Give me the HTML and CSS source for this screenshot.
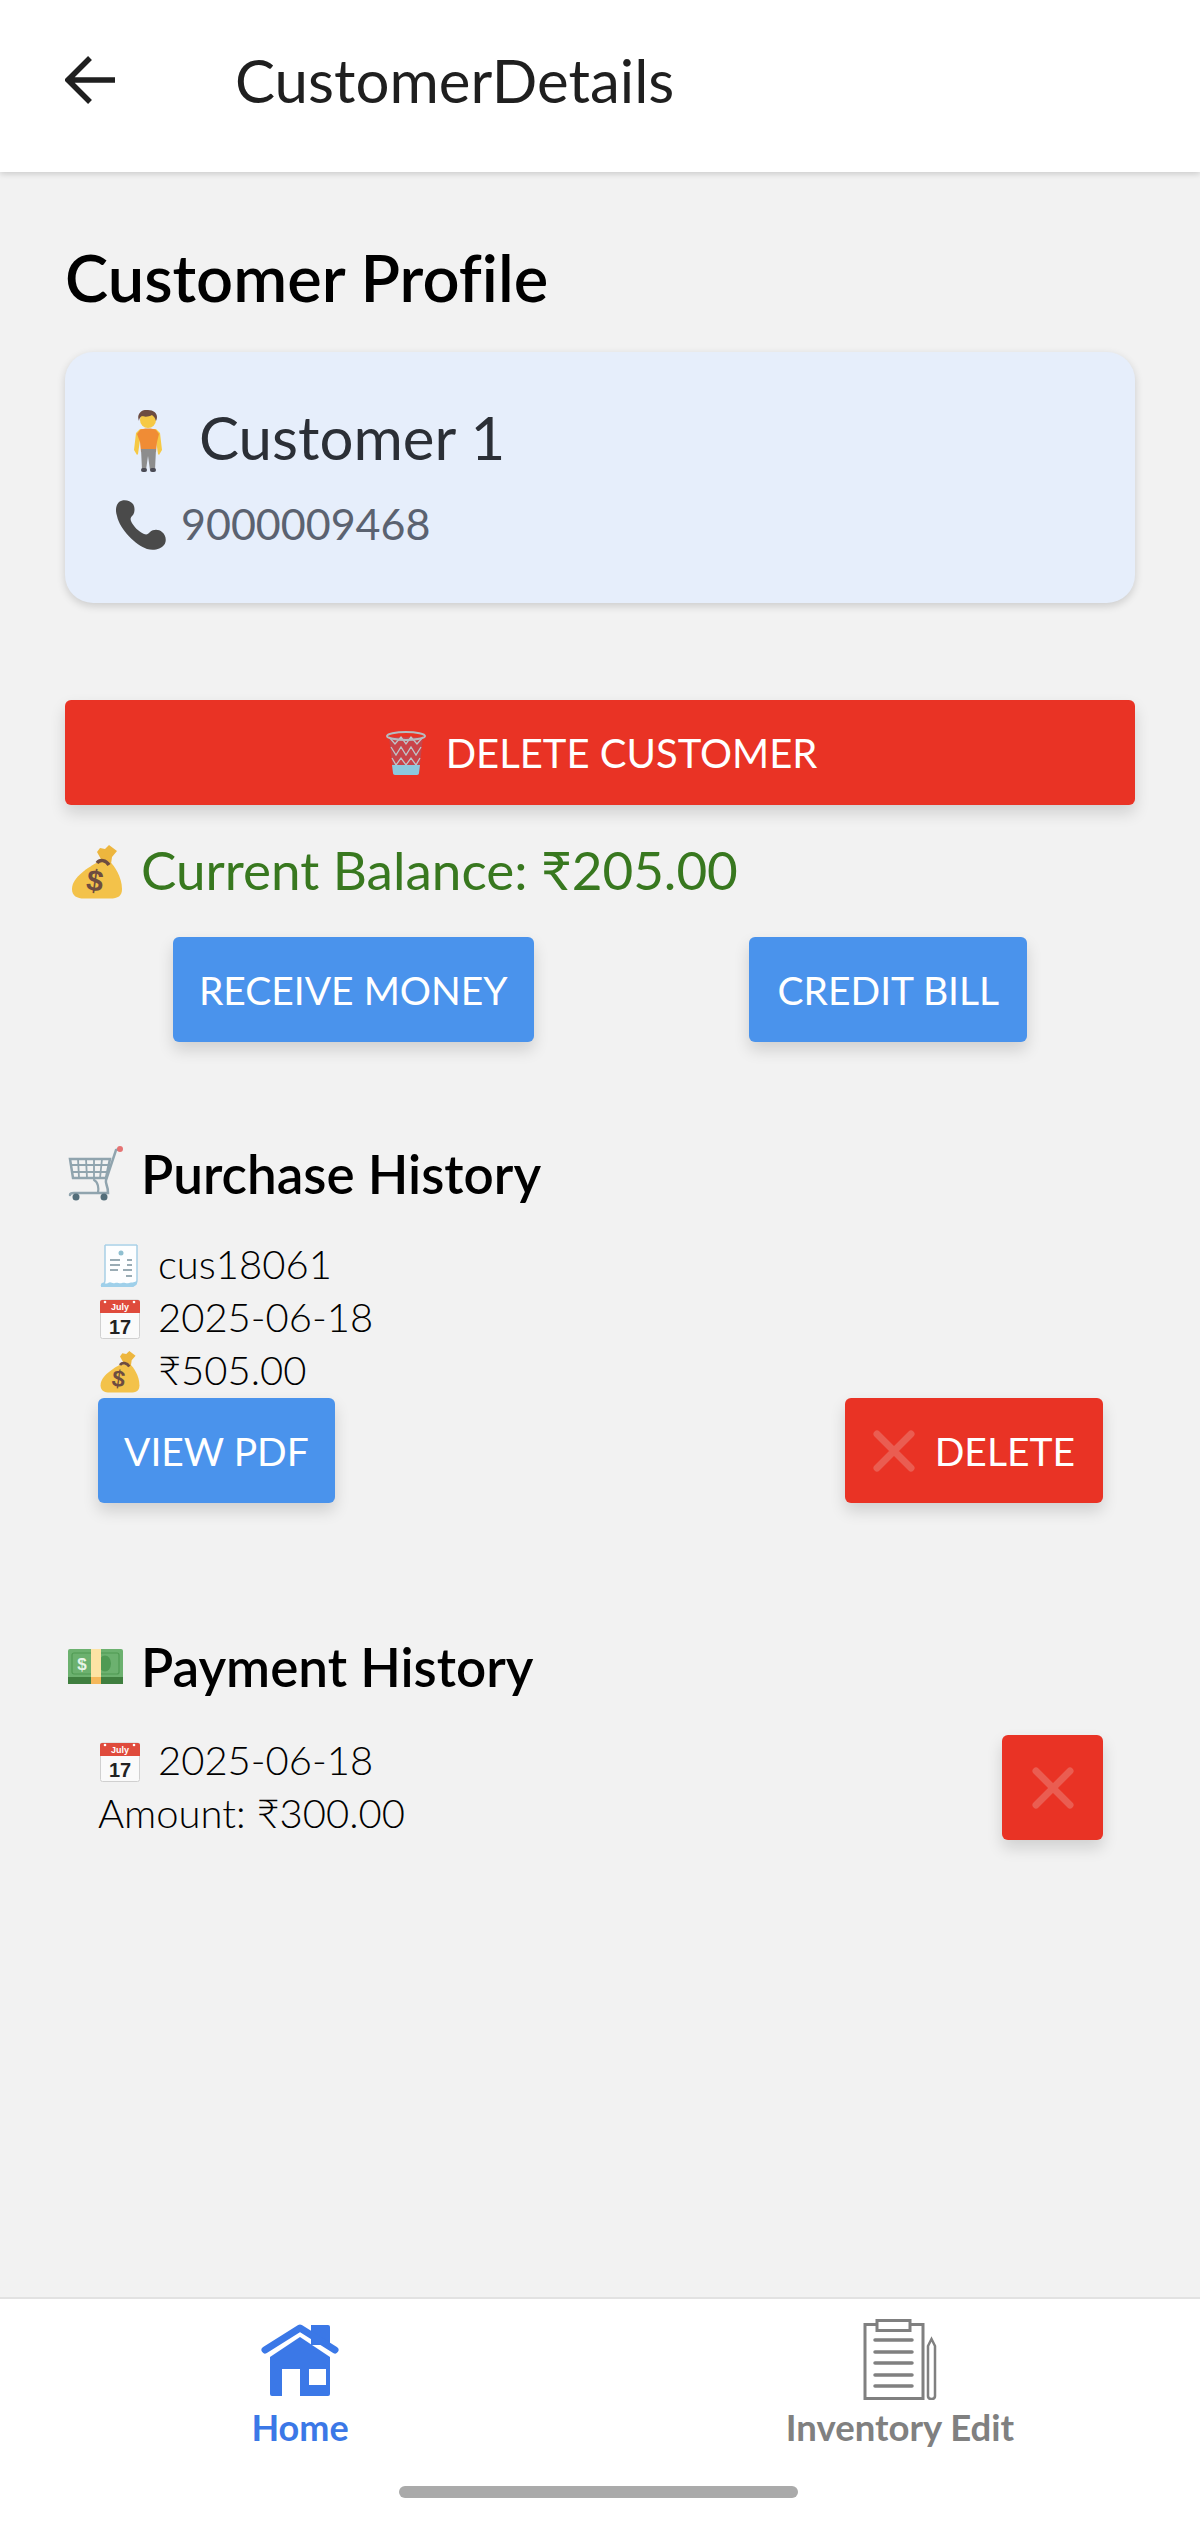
FILE: index.html
```html
<!DOCTYPE html>
<html lang="en">
<head>
<meta charset="utf-8">
<title>CustomerDetails</title>
<link rel="stylesheet" href="styles.css">
</head>
<body>
<div class="app">
  <header class="topbar">
    <svg class="back" viewBox="0 0 52 50" aria-hidden="true"><path d="M50 25H5M25 3L3 25l22 22" fill="none" stroke="#1f1f1f" stroke-width="5.500"/></svg>
    <div class="topbar-title">CustomerDetails</div>
  </header>

  <main class="content">
    <h1 class="page-title">Customer Profile</h1>

    <section class="card">
      <div class="card-name">
        <svg class="e-person" viewBox="0 0 28 63" aria-hidden="true">
          <path d="M6 19h16l4 4 2 17-3 5-1-1-2-14-1 0v9H7v-9l-1 0-2 14-1 1-3-5 2-17z" fill="#f6c945"/>
          <path d="M6 20c2-2 14-2 16 0l3 4-2 8-1 10H7L6 32l-3-8z" fill="#f08c35"/>
          <path d="M7 39h15l-1 21h-5l-2-14-2 14H8z" fill="#8d8d8d"/>
          <rect x="7" y="58" width="6" height="4" rx="2" fill="#4b4b55"/><rect x="16" y="58" width="6" height="4" rx="2" fill="#4b4b55"/>
          <circle cx="14" cy="10" r="8" fill="#f6c945"/>
          <path d="M5 11C2 4 8-1 14 0c7 0 11 5 8 11-1-4-3-5-4-6-3 2-8 2-10 1-2 1-3 3-3 5z" fill="#6d4c41"/>
        </svg>
        <span>Customer 1</span>
      </div>
      <div class="card-phone">
        <svg class="e-phone" viewBox="0 0 50 50" aria-hidden="true"><path d="M3 2c4-3 11-2 14 2 2 3 2 8 0 11-2 2-3 3-2 6 2 5 8 11 13 13 3 1 4 0 6-2 3-3 9-3 12 0 4 3 5 9 2 13-3 4-10 6-17 4C20 45 4 30 1 16-1 10 0 5 3 2z" fill="#4a4a4a"/></svg>
        <span>9000009468</span>
      </div>
    </section>

    <button class="btn btn-red btn-wide" type="button">
      <svg class="e-trash" viewBox="0 0 40 44" aria-hidden="true">
        <path d="M3 6h34l-4 36c0 1-1 2-2 2H9c-1 0-2-1-2-2z" fill="#c9444a"/>
        <path d="M3 6l6 7 6-7 5 7 5-7 6 7 6-7M5 16l5 8 5-8 5 8 5-8 5 8 5-8M6 27l4 7 5-7 5 7 5-7 5 7 4-7" fill="none" stroke="#bfc5c9" stroke-width="1.300"/>
        <path d="M6 34h28l-1 8c0 1-1 2-2 2H9c-1 0-2-1-2-2z" fill="#8cc9de"/>
        <ellipse cx="20" cy="5" rx="19" ry="4" fill="none" stroke="#b6bcc0" stroke-width="2"/>
      </svg>
      DELETE CUSTOMER
    </button>

    <div class="balance">
      <svg class="e-balance-bag" viewBox="0 0 50 54" aria-hidden="true">
        <path d="M26 17C17 22 0 32 0 44c0 7 5 9.500 12 9.500h26c8 0 12-2.500 12-9.500 0-12-8-24-12-27z" fill="#f3c24a"/>
        <path d="M25 7l3-4 5 1 4-4 8 6-5 6-1 7-9-3z" fill="#edb63e"/>
        <path d="M25 18c3-4 9-3 12 2" fill="none" stroke="#6d4c41" stroke-width="3.500"/>
        <text x="23" y="46" class="e-dollar" transform="rotate(8 23 36)">$</text>
      </svg>
      <span class="balance-text">Current Balance: ₹205.00</span>
    </div>

    <div class="actions">
      <button class="btn btn-blue" type="button">RECEIVE MONEY</button>
      <button class="btn btn-blue btn-credit" type="button">CREDIT BILL</button>
    </div>

    <h2 class="section-title section-purchase">
      <svg class="e-cart" viewBox="0 0 55 56" aria-hidden="true">
        <g fill="none" stroke="#90a4ae" stroke-linecap="round">
          <path d="M2 14h40l-4 19H5z" stroke-width="2.500"/>
          <path d="M10 14l1 19M18 14l1 19M26 14v19M34 14l-2 19M3 20h38M4 27h36" stroke-width="1.800"/>
          <path d="M52 4l-4 1-10 30c-1 4 2 5 2 13H6c-3 0-4 1-4 2" stroke-width="2.500"/>
          <path d="M26 35c4 2 5 8 4 13" stroke-width="2.200"/>
        </g>
        <circle cx="52" cy="4" r="3" fill="#e57373"/>
        <circle cx="8" cy="52" r="3.500" fill="#546e7a"/>
        <circle cx="36" cy="52" r="3.500" fill="#546e7a"/>
      </svg>
      <span>Purchase History</span>
    </h2>
    <div class="entry entry-purchase">
      <div class="line">
        <svg class="e-line e-h43" viewBox="0 0 40 43" aria-hidden="true">
          <path d="M5 0h32v37c0 3-1 5-4 6H0c3-2 5-4 5-7z" fill="#fdfeff"/>
          <path d="M5 1h32M5 1v35c0 3-2 5-4 6h32c3-1 4-3 4-6V1" fill="none" stroke="#a8cfe6" stroke-width="1.500"/>
          <path d="M1 40c3-3 4 1 7-1s4 1 7 0 4 1 7 0 4 1 7 0 4 0 8-2v3l-4 3H1z" fill="#9fd0ea"/>
          <circle cx="21" cy="9" r="2.500" fill="#8fbfd0"/>
          <path d="M10 16h10M27 16h5M10 21h10M27 21h5M10 26h8M23 26h9M26 32h6" stroke="#78909c" stroke-width="1.300"/>
        </svg>
        <span>cus18061</span>
      </div>
      <div class="line">
        <svg class="e-line e-h40" viewBox="0 0 40 40" aria-hidden="true">
          <rect x="0.500" y="1" width="39" height="38.500" rx="2" fill="#fafafa" stroke="#d0d0d0"/>
          <path d="M0 3a2 2 0 0 1 2-2h36a2 2 0 0 1 2 2v11H0z" fill="#df4b3c"/>
          <circle cx="5" cy="3" r="1.300" fill="#fff"/><circle cx="34" cy="3" r="1.300" fill="#fff"/>
          <text x="20" y="11" class="e-month">July</text>
          <text x="20" y="35" class="e-day">17</text>
        </svg>
        <span>2025-06-18</span>
      </div>
      <div class="line">
        <svg class="e-line e-h42" viewBox="0 0 50 54" aria-hidden="true">
          <path d="M26 17C17 22 0 32 0 44c0 7 5 9.500 12 9.500h26c8 0 12-2.500 12-9.500 0-12-8-24-12-27z" fill="#f3c24a"/>
          <path d="M25 7l3-4 5 1 4-4 8 6-5 6-1 7-9-3z" fill="#edb63e"/>
          <path d="M25 18c3-4 9-3 12 2" fill="none" stroke="#6d4c41" stroke-width="3.500"/>
          <text x="23" y="46" class="e-dollar" transform="rotate(8 23 36)">$</text>
        </svg>
        <span>₹505.00</span>
      </div>
      <div class="entry-actions">
        <button class="btn btn-blue" type="button">VIEW PDF</button>
        <button class="btn btn-red btn-delete" type="button">
          <svg class="e-x" viewBox="0 0 42 42" aria-hidden="true"><path d="M4 4l34 34M38 4L4 38" stroke="#ea5d51" stroke-width="7" stroke-linecap="round"/></svg>
          DELETE
        </button>
      </div>
    </div>

    <h2 class="section-title section-payment">
      <svg class="e-note" viewBox="0 0 55 35" aria-hidden="true">
        <path d="M2 0h51a2 2 0 0 1 2 2v33H0V2a2 2 0 0 1 2-2z" fill="#6cb16f"/>
        <rect x="0" y="28" width="55" height="7" fill="#3f7f3f"/>
        <rect x="4" y="4" width="47" height="21" rx="2" fill="none" stroke="#4f9a53" stroke-width="1.200"/>
        <ellipse cx="37" cy="14.500" rx="6" ry="8" fill="#4f9a53"/>
        <rect x="23" y="0" width="10" height="35" fill="#fde3a4"/>
        <rect x="23" y="28" width="10" height="7" fill="#f5b85c"/>
        <text x="14" y="21" class="e-note-dollar">$</text>
      </svg>
      <span>Payment History</span>
    </h2>
    <div class="entry entry-payment">
      <div>
        <div class="line">
          <svg class="e-line e-h40" viewBox="0 0 40 40" aria-hidden="true">
            <rect x="0.500" y="1" width="39" height="38.500" rx="2" fill="#fafafa" stroke="#d0d0d0"/>
            <path d="M0 3a2 2 0 0 1 2-2h36a2 2 0 0 1 2 2v11H0z" fill="#df4b3c"/>
            <circle cx="5" cy="3" r="1.300" fill="#fff"/><circle cx="34" cy="3" r="1.300" fill="#fff"/>
            <text x="20" y="11" class="e-month">July</text>
            <text x="20" y="35" class="e-day">17</text>
          </svg>
          <span>2025-06-18</span>
        </div>
        <div class="line"><span>Amount: ₹300.00</span></div>
      </div>
      <button class="btn btn-red btn-icon" type="button" aria-label="Delete">
        <svg class="e-x e-x-solo" viewBox="0 0 42 42" aria-hidden="true"><path d="M4 4l34 34M38 4L4 38" stroke="#ea5d51" stroke-width="7" stroke-linecap="round"/></svg>
      </button>
    </div>
  </main>

  <nav class="tabbar">
    <div class="tabs">
      <div class="tab tab-active">
        <div class="tab-icon">
          <svg class="i-home" viewBox="0 0 78 72" aria-hidden="true">
            <path d="M50 1h17a2 2 0 0 1 2 2v18H50z" fill="#3b78e7"/>
            <path d="M4 26L39 4l35 22" fill="none" stroke="#3b78e7" stroke-width="7" stroke-linecap="round" stroke-linejoin="round"/>
            <path fill-rule="evenodd" d="M9 33L39 13l30 20v37a2 2 0 0 1-2 2H39V45H21v27h-10a2 2 0 0 1-2-2zM48 45v16h17V45z" fill="#3b78e7"/>
          </svg>
        </div>
        <div class="tab-label">Home</div>
      </div>
      <div class="tab">
        <div class="tab-icon">
          <svg class="i-inv" viewBox="0 0 76 81" aria-hidden="true">
            <path d="M15 5.500H3V79.500H61V5.500H48" fill="none" stroke="#808080" stroke-width="3"/>
            <rect x="15" y="1.500" width="33" height="10" fill="#fff" stroke="#808080" stroke-width="3"/>
            <path d="M13 21h37M13 33h37M13 44h37M13 56h37M13 67h37" stroke="#808080" stroke-width="3.500" stroke-linecap="round"/>
            <path d="M66 27l3.500-7 3.500 7v50c0 2-1 3-3.500 3S66 79 66 77z" fill="none" stroke="#808080" stroke-width="2.500"/>
          </svg>
        </div>
        <div class="tab-label tab-label-long">Inventory Edit</div>
      </div>
    </div>
    <div class="home-indicator"></div>
  </nav>
</div>
</body>
</html>
```

FILE: styles.css
```css
* { box-sizing: border-box; }
html, body { margin: 0; padding: 0; }
body { background: #f2f2f2; font-family: "Lato", "Noto Sans", sans-serif; color: #000; font-variant-ligatures: none; }
svg { display: block; flex: none; }

.app { width: 1200px; height: 2528px; display: flex; flex-direction: column; }

.topbar { height: 172px; flex: none; background: #fff; display: flex; align-items: center; padding: 0 0 12px 65px; box-shadow: 0 2px 6px rgba(0,0,0,.16); position: relative; }
.back { width: 52px; height: 50px; }
.topbar-title { margin-left: 118px; font-size: 60px; line-height: 70px; color: #1f1f1f; }

.content { flex: 1; padding: 75px 65px 0; }
.page-title { margin: 0; font-size: 65px; line-height: 60px; font-weight: 600; }

.card { margin-top: 45px; height: 251px; padding-top: 53px; background: #e6eefb; border-radius: 28px; box-shadow: 0 3px 8px rgba(0,0,0,.16); }
.card-name { display: flex; align-items: center; height: 64px; padding-left: 69px; font-size: 60px; color: #2b2f36; }
.e-person { width: 28px; height: 63px; margin: 8px 37px 0 0; }
.card-phone { display: flex; align-items: center; height: 56px; margin-top: 26px; padding-left: 51px; font-size: 43px; color: #5b6270; }
.e-phone { width: 50px; height: 50px; margin: 4px 15px 0 0; }

.btn { display: flex; align-items: center; justify-content: center; height: 105px; padding: 0 26px; border: 0; border-radius: 6px; color: #fff; font-family: inherit; font-size: 39px; box-shadow: 0 8px 16px rgba(0,0,0,.14); }
.btn-red { background: #e93325; }
.btn-blue { background: #4a93ec; }
.btn-wide { width: 100%; margin-top: 97px; padding: 0 26px 0 29px; font-size: 40px; }
.btn-credit { padding: 0 28px; }
.btn-delete { padding: 0 28px; }
.btn-icon { width: 101px; padding: 0; }
.e-trash { width: 40px; height: 44px; margin-right: 20px; }
.e-x { width: 42px; height: 42px; margin-right: 20px; }
.e-x-solo { margin-right: 0; }

.balance { display: flex; align-items: center; height: 60px; margin-top: 37px; padding-left: 7px; font-size: 53px; color: #38781f; }
.balance-text { margin-top: -6px; }
.e-balance-bag { width: 50px; height: 54px; margin-right: 19px; }

.actions { display: flex; justify-content: space-around; margin-top: 35px; }

.section-title { display: flex; align-items: center; height: 60px; margin: 0; font-size: 53px; font-weight: 600; }
.section-purchase { margin-top: 101px; }
.section-payment { margin-top: 133px; }
.e-cart { width: 55px; height: 56px; margin: 0 18px 0 3px; }
.e-note { width: 55px; height: 35px; margin: 0 18px 0 3px; }

.entry { padding: 0 32px 0 33px; }
.entry-purchase { margin-top: 36px; }
.entry-payment { margin-top: 39px; display: flex; justify-content: space-between; align-items: flex-start; }
.line { display: flex; align-items: center; height: 53px; font-size: 40px; font-weight: 300; }
.line span { margin-top: -3px; }
.e-line { width: 40px; margin: 0 18px 0 2px; }
.e-h43 { height: 43px; }
.e-h40 { height: 40px; }
.e-h42 { height: 42px; }
.entry-actions { display: flex; justify-content: space-between; }

.e-dollar { font: 700 30px "Liberation Sans", sans-serif; fill: #6d4c41; text-anchor: middle; }
.e-month { font: 700 9px "Liberation Sans", sans-serif; fill: #fff; text-anchor: middle; }
.e-day { font: 700 20px "Liberation Sans", sans-serif; fill: #222; text-anchor: middle; }
.e-note-dollar { font: 700 17px "Liberation Sans", sans-serif; fill: #e8f5e9; text-anchor: middle; }

.tabbar { flex: none; height: 231px; background: #fff; border-top: 2px solid #e2e2e2; }
.tabs { display: grid; grid-template-columns: 1fr 1fr; padding-top: 20px; }
.tab { display: flex; flex-direction: column; align-items: center; color: #808080; }
.tab-active { color: #3b78e7; }
.tab-icon { height: 81px; display: flex; align-items: center; justify-content: center; }
.i-home { width: 78px; height: 72px; margin-left: -1px; }
.i-inv { width: 76px; height: 81px; }
.tab-label { margin-top: 7px; height: 40px; line-height: 40px; font-size: 36px; font-weight: 700; }
.tab-label-long { font-size: 36.500px; }
.home-indicator { width: 399px; height: 12px; margin: 39px 0 0 399px; background: #aaa; border-radius: 6px; }
```
